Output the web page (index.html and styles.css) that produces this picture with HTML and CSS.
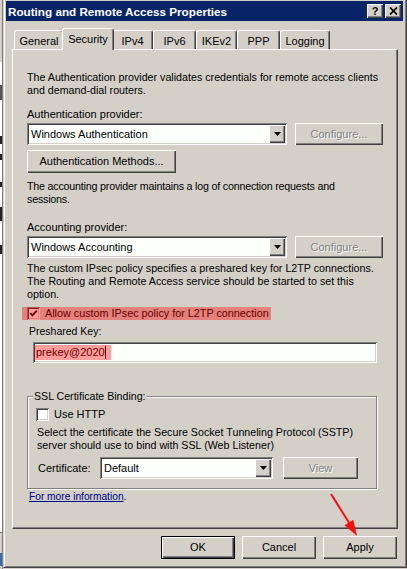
FILE: index.html
```html
<!DOCTYPE html>
<html>
<head>
<meta charset="utf-8">
<title>Routing and Remote Access Properties</title>
<link rel="stylesheet" href="styles.css">
</head>
<body>
<div class="screen">
  <div class="bgstrip">
    <div class="bs-top"></div>
    <div class="bs-win">
      <i class="frag f1"></i><i class="frag f2"></i><i class="frag f3"></i><i class="frag f4"></i><i class="frag f5"></i><i class="frag f6"></i>
    </div>
    <div class="bs-line"></div>
    <div class="bs-gray"></div>
    <div class="bs-desk"></div>
    <div class="bs-end"></div>
  </div>
  <div class="dialog">
    <div class="titlebar">
      <span class="title">Routing and Remote Access Properties</span>
      <div class="tbtns">
        <span class="tbtn raised help">?</span>
        <span class="tbtn raised"><svg width="9" height="8" viewBox="0 0 9 8"><path d="M1 0.5 L8 7.5 M8 0.5 L1 7.5" stroke="#000" stroke-width="1.7" fill="none"/></svg></span>
      </div>
    </div>

    <div class="tabs">
      <div class="tab t-general">General</div>
      <div class="tab sel">Security</div>
      <div class="tab t-ipv4">IPv4</div>
      <div class="tab t-ipv6">IPv6</div>
      <div class="tab t-ikev2">IKEv2</div>
      <div class="tab t-ppp">PPP</div>
      <div class="tab t-logging">Logging</div>
    </div>

    <div class="panel">
      <p class="para p1">The Authentication provider validates credentials for remote access clients<br>and demand-dial routers.</p>
      <div class="lbl lbl1">Authentication provider:</div>
      <div class="row row1">
        <div class="combo sunken c-main"><span class="val">Windows Authentication</span><span class="ddbtn raised"><svg width="7" height="4" viewBox="0 0 7 4"><path d="M0 0 H7 L3.5 4 Z" fill="#000"/></svg></span></div>
        <div class="btn raised disabled b-config">Configure...</div>
      </div>
      <div class="btn raised b-authm">Authentication Methods...</div>
      <p class="para p2">The accounting provider maintains a log of connection requests and<br>sessions.</p>
      <div class="lbl lbl2">Accounting provider:</div>
      <div class="row row2">
        <div class="combo sunken c-main"><span class="val">Windows Accounting</span><span class="ddbtn raised"><svg width="7" height="4" viewBox="0 0 7 4"><path d="M0 0 H7 L3.5 4 Z" fill="#000"/></svg></span></div>
        <div class="btn raised disabled b-config">Configure...</div>
      </div>
      <p class="para p3">The custom IPsec policy specifies a preshared key for L2TP connections.<br>The Routing and Remote Access service should be started to set this<br>option.</p>
      <div class="chkrow hl">
        <span class="chk sunken"><svg width="9" height="9" viewBox="0 0 9 9"><path d="M1.2 4 L3.4 6.4 L7.8 1.6" stroke="#000" stroke-width="1.7" fill="none"/></svg></span>
        <span class="chklbl">Allow custom IPsec policy for L2TP connection</span>
      </div>
      <div class="lbl lbl3">Preshared Key:</div>
      <div class="textbox sunken"><span class="keyval hl">prekey@2020<span class="caret"></span></span></div>

      <fieldset class="group">
        <legend>SSL Certificate Binding:</legend>
        <div class="chkrow plain">
          <span class="chk sunken"></span>
          <span class="chklbl">Use HTTP</span>
        </div>
        <p class="para p4">Select the certificate the Secure Socket Tunneling Protocol (SSTP)<br>server should use to bind with SSL (Web Listener)</p>
        <div class="row certrow">
          <span class="certlbl">Certificate:</span>
          <div class="combo sunken c-cert"><span class="val">Default</span><span class="ddbtn raised"><svg width="7" height="4" viewBox="0 0 7 4"><path d="M0 0 H7 L3.5 4 Z" fill="#000"/></svg></span></div>
          <div class="btn raised disabled b-view">View</div>
        </div>
      </fieldset>

      <div class="linkrow"><a class="link">For more information</a>.</div>
    </div>

    <div class="footer">
      <div class="btn raised default">OK</div>
      <div class="btn raised">Cancel</div>
      <div class="btn raised">Apply</div>
    </div>
  </div>
</div>
<svg class="arrow" width="407" height="569" viewBox="0 0 407 569">
  <path d="M331 494 L349.5 523.5" stroke="#f01010" stroke-width="2" fill="none"/>
  <path d="M357 536 L344.5 525.3 L353.3 519.8 Z" fill="#f01010"/>
</svg>
</body>
</html>
```

FILE: styles.css
```css
* { box-sizing: border-box; }
html, body { margin: 0; padding: 0; }
body {
  width: 407px; height: 569px; overflow: hidden; position: relative;
  background: #d4d0c8;
  font-family: "Liberation Sans", Arial, sans-serif;
  font-size: 11px; line-height: 13px; color: #000;
}
.screen { display: flex; height: 569px; }

/* background window strip */
.bgstrip { width: 3px; display: flex; flex-direction: column; border-right: 1px solid #808080; }
.bs-top { height: 62px; background: #d4d0c8; }
.bs-win { height: 470px; background: #fff; display: flex; flex-direction: column; }
.bs-line { height: 1px; background: #808080; }
.bs-gray { height: 20px; background: #d4d0c8; }
.bs-desk { height: 13px; background: #3a6ea5; }
.bs-end { flex: 1; background: #d4d0c8; }
.frag { display: block; width: 2px; background: #222; }
.f1 { height: 15px; margin-top: 23px; background: #555; }
.f2 { height: 8px; margin-top: 36px; }
.f3 { height: 6px; margin-top: 10px; }
.f4 { height: 5px; margin-top: 22px; }
.f5 { height: 14px; margin-top: 20px; }
.f6 { height: 9px; margin-top: 24px; }

/* dialog frame */
.dialog {
  width: 404px; height: 568px;
  padding: 1px 3px 2px 2px;
  border-left: 1px solid #d4d0c8;
  border-right: 1px solid #404040;
  border-bottom: 1px solid #404040;
  box-shadow: inset 1px 0 0 #fff, inset -1px -1px 0 #808080;
  display: flex; flex-direction: column;
  background: #d4d0c8;
}

.raised { box-shadow: inset 1px 1px 0 #fff, inset -1px -1px 0 #404040, inset -2px -2px 0 #808080; background: #d4d0c8; }
.sunken { box-shadow: inset 1px 1px 0 #808080, inset -1px -1px 0 #fff, inset 2px 2px 0 #404040, inset -2px -2px 0 #d4d0c8; }

/* title bar */
.titlebar {
  height: 20px; flex: none; background: #0a246a; color: #fff;
  display: flex; align-items: center; padding: 0 2px;
}
.title { flex: 1; font-weight: bold; font-size: 11.7px; }
.tbtns { display: flex; gap: 2px; }
.tbtn { width: 16px; height: 14px; display: flex; align-items: center; justify-content: center; color: #000; }
.help { font-weight: bold; font-size: 11px; line-height: 14px; }

/* tabs */
.tabs {
  height: 21px; flex: none; margin-top: 7px; padding-left: 8px;
  display: flex; align-items: flex-end; position: relative; z-index: 1;
}
.tab {
  height: 19px; padding-top: 2px;
  border-top: 1px solid #fff; border-left: 1px solid #fff; border-right: 1px solid #404040;
  box-shadow: inset -1px 0 0 #808080;
  border-radius: 3px 3px 0 0;
  background: #d4d0c8;
  display: flex; align-items: center; justify-content: center;
  white-space: nowrap;
}
.t-general { width: 50px; }
.t-ipv4 { width: 41px; }
.t-ipv6 { width: 43px; }
.t-ikev2 { width: 41px; }
.t-ppp { width: 43px; }
.t-logging { width: 50px; }
.tab.sel {
  width: 52px; height: 22px; padding-top: 0;
  margin: 0 -2px -1px; position: relative; z-index: 2;
}

/* panel */
.panel {
  height: 480px; flex: none; margin: 0 5px 0 6px; padding-left: 14px;
  border-top: 1px solid #fff; border-left: 1px solid #fff;
  border-right: 1px solid #404040; border-bottom: 1px solid #404040;
  box-shadow: inset -1px -1px 0 #808080;
  display: flex; flex-direction: column; align-items: flex-start;
}
.para { margin: 0; white-space: nowrap; font-size: 10.7px; }
.p1 { margin-top: 21px; }
.lbl1 { margin-top: 11px; }
.row { display: flex; align-items: center; }
.row1 { margin-top: 2px; }
.b-authm { margin-top: 5px; width: 149px; }
.p2 { margin-top: 7px; letter-spacing: -0.2px; }
.lbl2 { margin-top: 15px; }
.row2 { margin-top: 2px; }
.p3 { margin-top: 4px; }

.combo {
  height: 22px; background: #fcfffc;
  display: flex; align-items: center; padding: 2px 2px 2px 4px;
}
.combo .val { flex: 1; white-space: nowrap; }
.c-main { width: 260px; margin-right: 8px; }
.ddbtn { width: 16px; height: 18px; display: flex; align-items: center; justify-content: center; }

.btn {
  height: 23px; display: flex; align-items: center; justify-content: center;
  white-space: nowrap;
}
.b-config { width: 88px; height: 22px; }
.disabled { color: #808080; text-shadow: 1px 1px 0 #fff; }

/* checkbox rows */
.chkrow { display: flex; align-items: center; height: 13px; position: relative; }
.chkrow.hl { margin-top: 6px; margin-left: -5px; padding-left: 5px; width: 249px; }
.chk { width: 13px; height: 13px; background: #fff; display: flex; align-items: center; justify-content: center; flex: none; }
.chklbl { margin-left: 5px; white-space: nowrap; }
.chkrow.hl .chklbl { font-size: 10.8px; }
.hl::after {
  content: ""; position: absolute; inset: 0;
  background: rgba(255, 0, 0, 0.38);
}

.lbl3 { margin-top: 5px; margin-left: 2px; font-size: 10.5px; }
.textbox {
  margin-top: 4px; margin-left: 6px; width: 344px; height: 21px;
  background: #fcfffc; display: flex; align-items: center; padding-left: 1px;
}
.keyval { position: relative; display: inline-block; padding: 1px 5px 1px 2px; }
.caret { display: inline-block; width: 1px; height: 13px; background: #000; vertical-align: top; }

/* group box */
.group {
  margin: 27px 0 0 0; padding: 0 0 9px 9px; min-width: 0;
  width: 350px;
  border: 1px solid #808080;
  box-shadow: inset 1px 1px 0 #fff, 1px 1px 0 #fff;
}
.group legend { padding: 0 1px; margin-left: -4px; background: #d4d0c8; line-height: 13px; font-size: 10.6px; }
.chkrow.plain { margin-top: 5px; margin-left: -1px; }
.p4 { margin-top: 5px; }
.certrow { margin-top: 5px; }
.certlbl { width: 62px; margin-left: 1px; }
.c-cert { width: 173px; margin-right: 10px; }
.b-view { width: 75px; height: 22px; }

.linkrow { margin-top: 1px; margin-left: 2px; font-size: 10.2px; }
.link { color: #00008b; text-decoration: underline; }

/* footer buttons */
.footer { display: flex; justify-content: flex-end; gap: 7px; margin-top: 7px; padding-right: 6px; }
.footer .btn { width: 74px; }
.btn.default { border: 1px solid #000; }

.arrow { position: absolute; left: 0; top: 0; pointer-events: none; }
```
